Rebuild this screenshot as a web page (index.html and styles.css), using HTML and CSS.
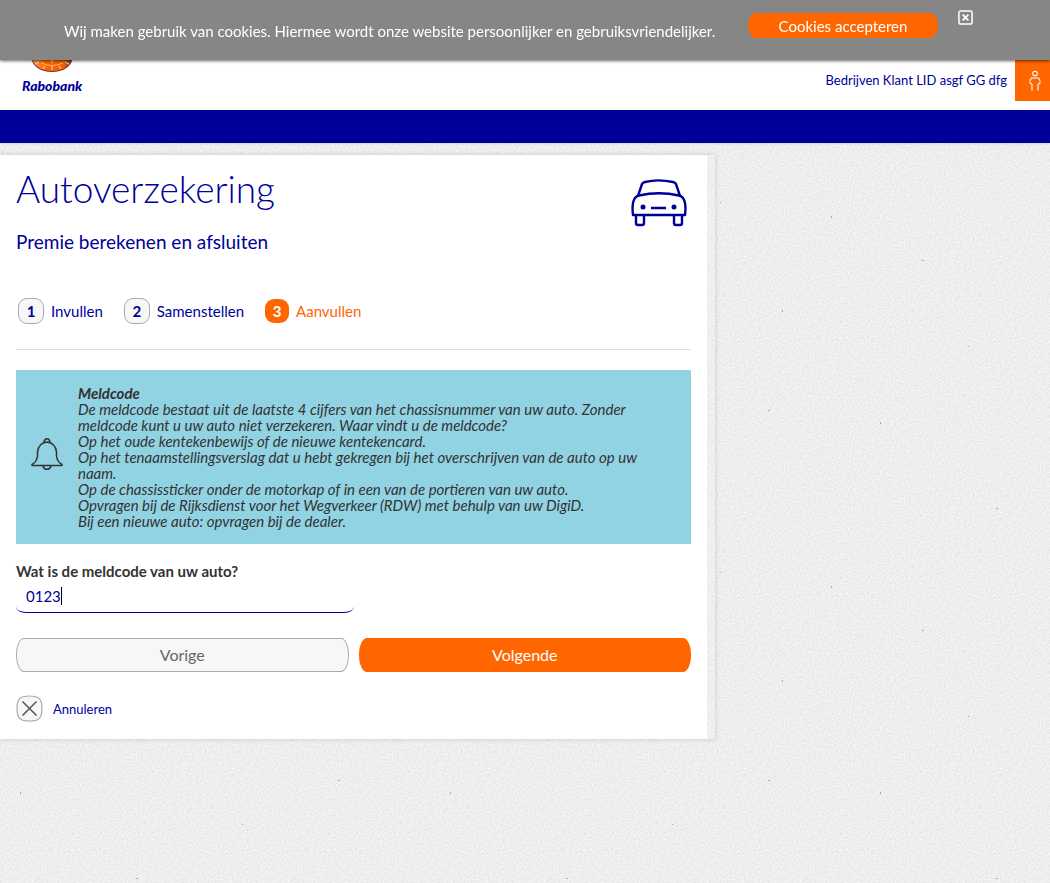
FILE: index.html
```html
<!DOCTYPE html>
<html lang="nl">
<head>
<meta charset="utf-8">
<meta name="viewport" content="width=device-width, initial-scale=1">
<title>Autoverzekering - Rabobank</title>
<link rel="stylesheet" href="styles.css">
</head>
<body>
<div class="cookie-bar" role="region" aria-label="Cookies">
  <p class="cookie-text">Wij maken gebruik van cookies. Hiermee wordt onze website persoonlijker en gebruiksvriendelijker.</p>
  <button class="cookie-accept" type="button">Cookies accepteren</button>
  <button class="cookie-close" type="button" aria-label="Sluiten">
    <svg width="15" height="15" viewBox="0 0 16 16" fill="none" stroke="#fff"><rect x="1" y="1" width="14" height="14" rx="2" stroke-width="1.6"/><path d="M5 5l6 6M11 5l-6 6" stroke-width="2"/></svg>
  </button>
</div>

<header class="header">
  <a class="logo" href="#">
    <svg width="42" height="42" viewBox="0 0 42 42" aria-hidden="true">
      <defs><linearGradient id="dial" x1="0" x2="1"><stop offset="0" stop-color="#f5a050"/><stop offset=".35" stop-color="#ff6600"/><stop offset=".8" stop-color="#f26000"/><stop offset="1" stop-color="#70304a"/></linearGradient></defs>
      <ellipse cx="21" cy="27" rx="20.500" ry="14" fill="#7a3030"/>
      <ellipse cx="21" cy="26" rx="20" ry="14" fill="url(#dial)"/>
      <path d="M21 28v4M21 35v4M14 35l-2 3M28 35l2 3M8 31l-4 2M34 31l4 2" stroke="#ffe0c8"/>
      <path d="M10 32q11 5 22 0" stroke="#ffc590" stroke-width=".8" fill="none"/>
    </svg>
    <span class="logo-name">Rabobank</span>
  </a>
  <div class="account">
    <a class="account-name" href="#">Bedrijven Klant LID asgf GG dfg</a>
    <button class="account-button" type="button" aria-label="Profiel">
      <svg width="14" height="22" viewBox="0 0 14 22" fill="none" stroke="#fff" stroke-width="1.100"><circle cx="7" cy="3.500" r="2.300"/><path d="M4 20.500v-6l-2-1.500q-.5-3 1.500-5h7q2 2 1.500 5l-2 1.500v6"/></svg>
    </button>
  </div>
</header>
<nav class="nav-bar" aria-label="Hoofdmenu"></nav>

<main class="panel">
  <div class="card">
    <div class="heading">
      <div>
        <h1 class="title">Autoverzekering</h1>
        <h2 class="subtitle">Premie berekenen en afsluiten</h2>
      </div>
      <svg class="car" width="56" height="48" viewBox="0 0 56 48" fill="none" stroke="#000099" stroke-width="2.400" stroke-linejoin="round" aria-hidden="true">
        <path d="M7 17l4-12q1-1.500 3-2 13-3.200 28 0 2 .5 3 2l4 12"/>
        <path d="M2 36q-1.500-12 2-17 1.500-2 4-2.500 20-4.500 40 0 2.500.5 4 2.500 3.500 5 2 17z"/>
        <path d="M5 36v8q0 2 2 2h4q2 0 2-2v-8M43 36v8q0 2 2 2h4q2 0 2-2v-8M20 29h15"/>
        <circle cx="12" cy="28" r="2.500" fill="#000099" stroke="none"/><circle cx="43" cy="28" r="2.500" fill="#000099" stroke="none"/>
      </svg>
    </div>

    <ol class="steps">
      <li class="step"><span class="step-number">1</span>Invullen</li>
      <li class="step"><span class="step-number">2</span>Samenstellen</li>
      <li class="step step-current" aria-current="step"><span class="step-number">3</span>Aanvullen</li>
    </ol>

    <section class="notice">
      <svg class="bell" width="32" height="32" viewBox="0 0 32 32" fill="none" stroke="#333" stroke-width="1.500" stroke-linejoin="round" aria-hidden="true">
        <path d="M1 27.500v-1q5-3 5.500-8.500v-4Q7.500 5 16 4q8.500 1 9.500 10v4q.5 5.500 5.500 8.500v1zM13 4.300q.5-3.500 3-3.500t3 3.500M12 28q1 3.300 4 3.300t4-3.300"/>
      </svg>
      <div class="notice-text">
        <strong>Meldcode</strong>
        <p>De meldcode bestaat uit de laatste 4 cijfers van het chassisnummer van uw auto. Zonder meldcode kunt u uw auto niet verzekeren. Waar vindt u de meldcode?</p>
        <p>Op het oude kentekenbewijs of de nieuwe kentekencard.</p>
        <p>Op het tenaamstellingsverslag dat u hebt gekregen bij het overschrijven van de auto op uw naam.</p>
        <p>Op de chassissticker onder de motorkap of in een van de portieren van uw auto.</p>
        <p>Opvragen bij de Rijksdienst voor het Wegverkeer (RDW) met behulp van uw DigiD.</p>
        <p>Bij een nieuwe auto: opvragen bij de dealer.</p>
      </div>
    </section>

    <form class="form">
      <label class="label" for="meldcode">Wat is de meldcode van uw auto?</label>
      <div class="field"><input class="input" id="meldcode" type="text" value="0123" maxlength="4"></div>
      <div class="buttons">
        <button class="button" type="button">Vorige</button>
        <button class="button button-primary" type="submit">Volgende</button>
      </div>
      <a class="cancel" href="#">
        <svg width="27" height="27" viewBox="0 0 27 27" fill="none" aria-hidden="true"><path d="M13.500 1C23 1 26 4 26 13.500S23 26 13.500 26 1 23 1 13.500 4 1 13.500 1z" fill="#f7f7f7" stroke="#aaa" stroke-width="1.200"/><path d="M6.500 6.500l14 14M20.500 6.500l-14 14" stroke="#555" stroke-width="1.500"/></svg>
        Annuleren
      </a>
    </form>
  </div>
</main>
</body>
</html>
```
FILE: styles.css
```css
* {
  box-sizing: border-box;
}

body {
  margin: 0;
  min-height: 100vh;
  color: #333;
  font: 15px/16px Lato, "Noto Sans", sans-serif;
  background-color: #ededed;
  background-image:
    url("data:image/svg+xml,%3Csvg xmlns='http://www.w3.org/2000/svg' width='430' height='370'%3E%3Cg fill='%23aaa'%3E%3Cpath d='M20 52h1v2h-1zM136 138h2v1h-2zM242 84h1v1h-1zM401 216h1v2h-1zM62 260h2v1h-2zM290 202h1v1h-1zM108 346h1v1h-1zM338 40h2v1h-2zM352 310h1v2h-1zM205 290h1v1h-1z'/%3E%3C/g%3E%3C/svg%3E"),
    url("data:image/svg+xml,%3Csvg xmlns='http://www.w3.org/2000/svg' width='256' height='256'%3E%3Cfilter id='n' x='0' y='0' width='100%25' height='100%25' color-interpolation-filters='sRGB'%3E%3CfeTurbulence type='fractalNoise' baseFrequency='.55' numOctaves='3' stitchTiles='stitch'/%3E%3CfeColorMatrix values='.12 0 0 0 .872 .12 0 0 0 .872 .12 0 0 0 .872 0 0 0 0 1'/%3E%3C/filter%3E%3Crect width='256' height='256' filter='url(%23n)'/%3E%3C/svg%3E");
}

button,
input {
  margin: 0;
  font: inherit;
}

button {
  cursor: pointer;
}

a {
  color: #000099;
  text-decoration: none;
}

h1,
h2,
p {
  margin: 0;
}

.cookie-bar {
  position: fixed;
  z-index: 1;
  top: 0;
  left: 0;
  right: 0;
  display: flex;
  align-items: flex-start;
  gap: 20px;
  height: 60px;
  padding: 10px 77px 0 64px;
  color: #fff;
  background: #868686;
  box-shadow: 0 1px 3px rgba(0, 0, 0, 0.6);
}

.cookie-text {
  flex: 1;
  line-height: 43px;
  white-space: nowrap;
}

.cookie-accept {
  width: 190px;
  height: 25px;
  margin-top: 3px;
  padding: 0;
  border: 0;
  border-radius: 8px / 12px;
  color: #fff;
  background: #ff6600;
}

.cookie-close {
  display: flex;
  padding: 0;
  border: 0;
  background: none;
}

.header {
  display: flex;
  justify-content: space-between;
  height: 110px;
  background: #fff;
}

.logo {
  display: flex;
  flex-direction: column;
  align-items: center;
  padding: 31px 0 0 22px;
}

.logo-name {
  margin-top: 5px;
  font-size: 14px;
  font-style: italic;
  font-weight: 900;
}

.account {
  display: flex;
  align-items: stretch;
  height: 101px;
  padding-top: 60px;
  gap: 8px;
  font-size: 13px;
  line-height: 41px;
}

.account-button {
  display: flex;
  align-items: center;
  justify-content: center;
  width: 35px;
  padding: 0 0 0 4px;
  border: 0;
  background: #ff6600;
}

.nav-bar {
  height: 33px;
  background: #000099;
  box-shadow: 0 1px 2px rgba(0, 0, 0, 0.1);
}

.panel {
  width: 68.1%;
  margin-top: 12px;
  padding-right: 8px;
  background: rgba(255, 255, 255, 0.1);
  box-shadow: 0 0 5px rgba(0, 0, 0, 0.16);
}

.card {
  padding: 12px 16px 17px;
  background: #fff;
}

.heading {
  display: flex;
  align-items: flex-start;
  justify-content: space-between;
  padding-right: 4px;
  color: #000099;
}

.title {
  font-size: 37px;
  font-weight: 300;
  line-height: 44px;
}

.subtitle {
  margin-top: 19px;
  font-size: 19px;
  font-weight: 400;
  line-height: 24px;
}

.car {
  margin-top: 12px;
}

.steps {
  display: flex;
  gap: 21px;
  margin: 0;
  padding: 44px 0 25px 2px;
  list-style: none;
  color: #000099;
  border-bottom: 1px solid #ddd;
}

.step {
  display: flex;
  align-items: center;
  gap: 7px;
}

.step-number {
  width: 26px;
  height: 26px;
  border: 1px solid #aaa;
  border-radius: 9px;
  font-weight: 700;
  line-height: 24px;
  text-align: center;
  background: #f7f7f7;
}

.step-current {
  color: #ff6600;
}

.step-current .step-number {
  width: 24px;
  height: 24px;
  border: 0;
  color: #fff;
  background: #ff6600;
}

.notice {
  display: flex;
  align-items: center;
  gap: 15px;
  margin-top: 20px;
  padding: 15px 30px 15px 15px;
  font-style: italic;
  background: #91d2e3;
}

.bell {
  flex: none;
  margin-top: -6px;
}

.notice-text {
  flex: 1;
}

.form {
  display: flex;
  flex-direction: column;
  align-items: flex-start;
  margin-top: 17px;
}

.label {
  font-weight: 700;
  line-height: 20px;
}

.field {
  position: relative;
  width: 50%;
}

/* Text cursor drawn right after the four-digit code */
.field::after {
  content: "";
  position: absolute;
  top: 6px;
  left: 45px;
  width: 1px;
  height: 18px;
  background: #000;
}

.input {
  display: block;
  width: 100%;
  height: 32px;
  padding: 0 10px 2px;
  border: 0;
  border-bottom: 1px solid #000099;
  border-radius: 0 0 10px 10px / 0 0 6px 6px;
  outline: 0;
  color: #000099;
  background: #fff;
}

.buttons {
  display: grid;
  grid-template-columns: 1fr 1fr;
  gap: 10px;
  width: 100%;
  margin-top: 25px;
}

.button {
  height: 34px;
  border: 1px solid #aaa;
  border-radius: 8px / 16px;
  color: #666;
  font-size: 16px;
  background: #f7f7f7;
}

.button-primary {
  border-color: #ff6600;
  color: #fff;
  background: #ff6600;
}

.cancel {
  display: flex;
  align-items: center;
  gap: 10px;
  margin-top: 23px;
  font-size: 13px;
}
```
